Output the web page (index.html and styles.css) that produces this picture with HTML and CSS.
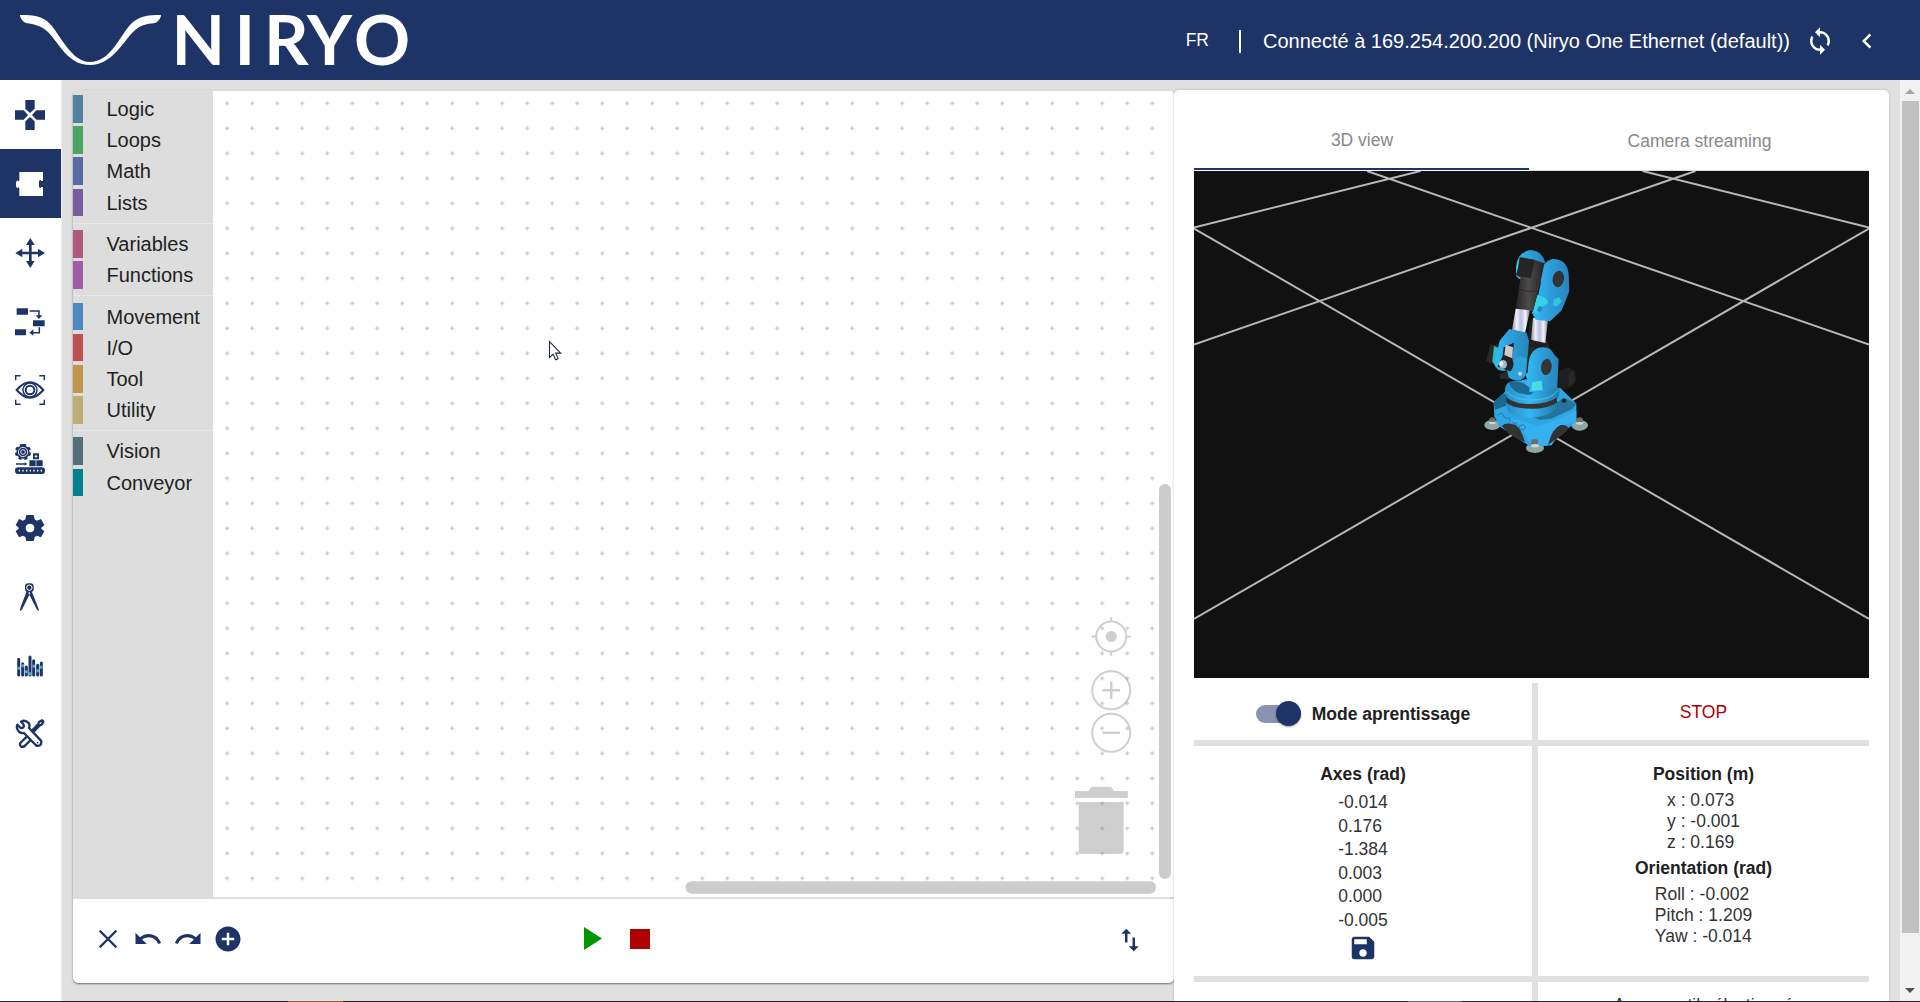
FILE: index.html
```html
<!DOCTYPE html>
<html lang="fr">
<head>
<meta charset="utf-8">
<title>Niryo One Studio</title>
<link rel="stylesheet" href="styles.css">
</head>
<body>
<div class="app">
  <header class="header">
    <svg class="logo" viewBox="0 0 400 80" width="400" height="80" role="img" aria-label="Niryo">
      <path fill="#fff" d="M0 15C14 15 23 16 30 24C40 34 51 62 70 62C90 62 100 36 110 25C118 16 127 15 141 15C141 18 138 22 135 23C126 24 120 25 113 32C103 42 92 65 70 65C48 65 39 43 28 32C22 26 14 24 6 23C3 22 0 18 0 15Z"/>
      <text class="logo-text" y="65" x="151.500 214.500 244 287 334">NIRYO</text>
    </svg>
    <div class="status">
      <span class="lang">FR</span>
      <span class="divider"></span>
      <span class="connection">Connecté à 169.254.200.200 (Niryo One Ethernet (default))</span>
      <svg class="icon sync" viewBox="0 0 24 24"><path d="M12 4V1L8 5l4 4V6c3.310 0 6 2.690 6 6 0 1.010-.25 1.970-.7 2.800l1.460 1.460C19.540 15.030 20 13.570 20 12c0-4.420-3.580-8-8-8zm0 14c-3.310 0-6-2.690-6-6 0-1.010.25-1.970.7-2.800L5.240 7.740C4.460 8.970 4 10.430 4 12c0 4.420 3.580 8 8 8v3l4-4-4-4v3z"/></svg>
      <svg class="icon chevron" viewBox="0 0 24 24"><path d="M15.410 7.410L14 6l-6 6 6 6 1.410-1.410L10.830 12z"/></svg>
    </div>
  </header>

  <div class="body">
    <nav class="sidebar">
      <a class="nav-item"><svg viewBox="0 0 90 90"><path d="M31 0h28v26L45 39 31 26z"/><path d="M31 0h28v26L45 39 31 26z" transform="rotate(90 45 45)"/><path d="M31 0h28v26L45 39 31 26z" transform="rotate(180 45 45)"/><path d="M31 0h28v26L45 39 31 26z" transform="rotate(270 45 45)"/></svg></a>
      <a class="nav-item active"><svg viewBox="0 0 90 90"><path d="M13 9h71v27h-5l-2-3-5 2v20l5 2 2-3h5v27H13V57l-3-2-2 3-5-5V39l5-5 2 3 3-2z"/></svg></a>
      <a class="nav-item"><svg viewBox="0 0 90 90"><path d="M46 0l13 21h-9v20h19v-9l21 13-21 13v-9H50v20h9L46 90 33 69h9V49H22v9L1 45l21-13v9h20V21h-9z"/></svg></a>
      <a class="nav-item"><svg viewBox="0 0 90 90"><path d="M5 4h34v19H5zM54 40h35v18H54zM0 67h33v18H0z"/><path class="line" d="M44 12h28v15M73 61v16H49"/><path d="M62 25h20L72 36zM55 67v19L43 77z"/></svg></a>
      <a class="nav-item"><svg viewBox="0 0 90 90"><path class="line" d="M2 16V2h15M73 2h15v14M2 74v14h15M73 88h15V74"/><path class="line eye" d="M5 45Q45-1 85 45Q45 91 5 45z"/><circle class="line" cx="45" cy="45" r="21"/><circle class="line eye" cx="45" cy="45" r="13"/></svg></a>
      <a class="nav-item"><svg viewBox="0 0 90 90"><circle cx="24" cy="24" r="20"/><path class="line" style="stroke-width:9" stroke-dasharray="9 7.500" d="M24 4a20 20 0 1 1-.1 0"/><circle cx="24" cy="24" r="14" fill="none" stroke="#fff" stroke-width="2.500"/><circle cx="24" cy="24" r="7" fill="none" stroke="#fff" stroke-width="2.500"/><path d="M54 28h18v18H54zM43 49h19v18H43zM64 49h19v18H64z"/><path stroke="#fff" stroke-width="3" d="M59 37h8M63 33v8"/><path class="line" d="M3 60h28"/><path d="M29 55l8 5-8 5z"/><rect y="70" width="90" height="20" rx="10"/><path stroke="#fff" stroke-width="5" stroke-dasharray="4 7" d="M11 80h70"/></svg></a>
      <a class="nav-item"><svg viewBox="0 0 90 90"><path fill-rule="evenodd" d="M34 6h22l3 13 7 4 12-5 10 18-9 8v3l9 8-10 18-12-5-7 4-3 12H34l-3-12-7-4-12 5L2 55l9-8v-3l-9-8 10-18 12 5 7-4zM45 32a13 13 0 1 0 .1 0z"/></svg></a>
      <a class="nav-item"><svg viewBox="0 0 90 90"><path d="M35 28l11 4-25 51-6 4 1-9zM50 28l-10 4 26 51 6 4-2-9z"/><rect x="30" y="4" width="26" height="26" rx="10"/><circle cx="43" cy="17" r="8" fill="none" stroke="#fff" stroke-width="3"/></svg></a>
      <a class="nav-item"><svg viewBox="0 0 90 90"><path class="bars" d="M11 25v47M23 38v34M34 48v24M45 18v54M56 29v43M68 43v29M79 36v36"/><path stroke="#4aa8c9" stroke-width="9" d="M7 52h8M19 44h8M30 62h8M41 68h8M52 46h8M64 59h8M75 49h8"/></svg></a>
      <a class="nav-item"><svg viewBox="0 0 90 90"><path class="tool" d="M18 8q12-7 24 5 3 7 0 14l36 38q3 8-3 14-7 4-13-1L27 42Q12 44 6 28q-1-6 1-11l10 10q8 1 10-6-1-7-9-13z"/><path class="tool" d="M52 34l18-19 2-6 9-5 4 4-5 9-6 2-18 19M36 52L16 72q-3 8 4 12 8 0 12-6l14-14"/><circle cx="68" cy="71" r="2.500"/></svg></a>
    </nav>

    <main class="main">
      <section class="editor">
        <div class="editor-top">
          <ul class="toolbox">
            <li class="cat" style="border-color:#5381a2">Logic</li>
            <li class="cat" style="border-color:#4aa564">Loops</li>
            <li class="cat" style="border-color:#5969a3">Math</li>
            <li class="cat" style="border-color:#795da3">Lists</li>
            <li class="sep"></li>
            <li class="cat" style="border-color:#af587c">Variables</li>
            <li class="cat" style="border-color:#a25ba5">Functions</li>
            <li class="sep"></li>
            <li class="cat" style="border-color:#4f87c0">Movement</li>
            <li class="cat" style="border-color:#c05053">I/O</li>
            <li class="cat" style="border-color:#bf964b">Tool</li>
            <li class="cat" style="border-color:#beac74">Utility</li>
            <li class="sep"></li>
            <li class="cat" style="border-color:#546e7a">Vision</li>
            <li class="cat" style="border-color:#00838f">Conveyor</li>
          </ul>
          <svg class="workspace" width="961" height="806" viewBox="213 91 961 806">
            <defs>
              <pattern id="grid" x="214.700" y="90.800" width="25" height="25" patternUnits="userSpaceOnUse"><path stroke="#c8c8c8" stroke-width="1.400" d="M10.600 12.500h3.800M12.500 10.600v3.800"/></pattern>
            </defs>
            <rect x="213" y="91" width="961" height="806" fill="#fff"/>
            <rect x="213" y="91" width="961" height="806" fill="url(#grid)"/>
            <g opacity=".4" fill="none" stroke="#888" stroke-width="2">
              <circle cx="1111.200" cy="636.500" r="15"/>
              <circle cx="1111.200" cy="636.500" r="5.500" fill="#888" stroke="none"/>
              <path d="M1111.200 617v4.500M1111.200 651.500v4.500M1091.500 636.500h4.500M1126.500 636.500h4.500"/>
              <circle cx="1111.200" cy="690.300" r="19"/>
              <path d="M1102.500 690.300h17.500M1111.200 681.500v17.500" stroke-width="2.400"/>
              <circle cx="1111.200" cy="732.800" r="19"/>
              <path d="M1102.500 732.800h17.500" stroke-width="2.400"/>
              <path fill="#888" stroke="none" d="M1075 791h13.500l3-4.300h19.500l3 4.300h13.800v7H1075zM1078.700 802h45v48.500q0 3.500-3.500 3.500h-38q-3.500 0-3.500-3.500z"/>
            </g>
            <rect x="1159" y="484" width="12" height="395" rx="6" fill="#ccc"/>
            <rect x="685.500" y="881.300" width="470.500" height="12.500" rx="6.200" fill="#ccc"/>
            <path fill="#fff" stroke="#222b38" stroke-width="1.100" d="M549.500 341.500v16l3.700-3.400 2.400 5.600 2.500-1.100-2.400-5.500h5z"/>
          </svg>
        </div>
        <div class="toolbar">
          <div class="tools">
            <svg class="icon" viewBox="0 0 24 24"><path fill="none" stroke="#1f3466" stroke-width="1.700" d="M5.300 5.300l13.400 13.400M18.700 5.300L5.300 18.700"/></svg>
            <svg class="icon" viewBox="0 0 24 24"><path d="M12.500 8c-2.650 0-5.050.99-6.900 2.600L2 7v9h9l-3.620-3.620c1.390-1.160 3.160-1.880 5.120-1.880 3.540 0 6.550 2.310 7.600 5.500l2.370-.78C21.080 11.030 17.150 8 12.500 8z"/></svg>
            <svg class="icon" viewBox="0 0 24 24"><path d="M18.400 10.600C16.550 8.990 14.150 8 11.500 8c-4.650 0-8.580 3.030-9.960 7.220L3.900 16c1.050-3.190 4.050-5.500 7.600-5.500 1.950 0 3.730.72 5.120 1.880L13 16h9V7l-3.600 3.600z"/></svg>
            <svg class="icon" viewBox="0 0 24 24"><path d="M12 2C6.480 2 2 6.480 2 12s4.480 10 10 10 10-4.480 10-10S17.520 2 12 2zm5 11h-4v4h-2v-4H7v-2h4V7h2v4h4v2z"/></svg>
          </div>
          <div class="run">
            <svg width="18" height="23" viewBox="0 0 18 23"><path fill="#009600" d="M0 0l18 11.500L0 23z"/></svg>
            <span class="stop-square"></span>
          </div>
          <svg class="icon swap" viewBox="0 0 24 24"><path d="M16 17.010V10h-2v7.010h-3L15 21l4-3.990h-3zM9 3L5 6.990h3V14h2V6.990h3L9 3z"/></svg>
        </div>
      </section>

      <section class="panel">
        <div class="tabs">
          <div class="tab selected">3D view</div>
          <div class="tab">Camera streaming</div>
        </div>
        <svg class="scene" width="675" height="507" viewBox="0 0 675 507">
          <defs>
            <linearGradient id="blue"><stop offset="0" stop-color="#2fc0ee"/><stop offset=".35" stop-color="#2fa4e2"/><stop offset="1" stop-color="#2784bb"/></linearGradient>
            <linearGradient id="drum"><stop offset="0" stop-color="#2490c4"/><stop offset=".45" stop-color="#35b4f4"/><stop offset="1" stop-color="#217aa8"/></linearGradient>
            <linearGradient id="steel"><stop offset="0" stop-color="#8b8b98"/><stop offset=".25" stop-color="#f0f0fb"/><stop offset=".5" stop-color="#b8c0de"/><stop offset=".75" stop-color="#f2f2fa"/><stop offset="1" stop-color="#77777f"/></linearGradient>
            <linearGradient id="dark"><stop offset="0" stop-color="#242424"/><stop offset=".45" stop-color="#4c4c4c"/><stop offset="1" stop-color="#222"/></linearGradient>
          </defs>
          <rect width="675" height="507" fill="#111"/>
          <path stroke="#b8b8b8" stroke-width="2" d="M0 56.500L226.500 0M675 56.500L448.500 0M173 0l502 173.500M501.500 0L0 173.500M0 57.500L675 448M675 57.500L0 448"/>
          <g transform="translate(266 59) scale(.33333)">
            <g fill="#8fa6a6"><ellipse cx="97" cy="585" rx="24" ry="15"/><ellipse cx="359" cy="586" rx="25" ry="16"/><ellipse cx="225" cy="654" rx="27" ry="15"/></g>
            <path fill="#1e1e1e" d="M296 424l25-13 25 12 3 27-11 19-27 11-17-8z"/>
            <path fill="#292929" d="M326 431l17-7v35l-17 8z"/>
            <path fill="#2fa6e4" d="M101 517l34-32 166-11 48 47v51l-12 12-72 62-57 2-90-59-15-30z"/>
            <path fill="#24749e" d="M213 541l85-28 13-11 38 19-12 16-63 29-34 4-35-14z"/>
            <path fill="#1c6a94" d="M101 517l29-28 12 8-3 30-34 12z"/>
            <path fill="#35b0f0" d="M170 569l66 19 70-25 43-23v35l-32 8-42 63-30 2-37-13-26-50-42-16z"/>
            <path fill="#333" d="M125 587q16-12 42-2 17 12 28 51l-26-11-24-15zM264 645q12-50 38-60 20-2 25 12l-22 19z"/>
            <path fill="none" stroke="#217bac" stroke-width="3" d="M113 556l12-8 10 16 14 0 1 12M158 574l7 10 6-8M178 590a9 7 0 1 0 18 4a9 7 0 1 0-18-4"/>
            <path fill="url(#drum)" d="M141 502v38q16 25 68 23 60-2 82-30v-36z"/>
            <path fill="url(#drum)" d="M135 475q3-25 40-22l80-18 43 41q7 30-30 48-68 20-113-9-21-13-20-40z"/>
            <path fill="#1c688f" d="M145 456q42-10 77 30l-10 8q-52 2-67-38z"/>
            <path fill="#333" d="M139 501q24 22 76 21 50 0 76-20v16q-31 19-79 18-53-1-73-18z"/>
            <path fill="none" stroke="#4bc0e8" stroke-width="3" d="M137 483q29 29 78 27 57 1 80-30"/>
            <ellipse cx="312" cy="512" rx="7" ry="6" fill="#222"/>
            <path fill="#292929" d="M205 343l20-15 36 3 9 26-60 72-50 19-39-1-2-14 48-20z"/>
            <path fill="#1f1f1f" d="M207 275l14-10-8 72 50 2-10 25-48-15z"/>
            <path fill="url(#steel)" d="M219 263l45 8-8 68-43-10z"/>
            <path fill="url(#blue)" d="M204 427q-1-58 28-72 37-11 51 19l13 14-4 81-34 17-51 1 5-35q-17-5-14-21z"/>
            <path fill="#49dce6" d="M217 456l28-4 3 29-34 1z"/>
            <ellipse cx="259" cy="411" rx="16" ry="24" fill="#343434" transform="rotate(8 259 411)"/>
            <path fill="#2a2a2a" d="M232 108l34-20 14 0-34 34-8 40z"/>
            <path fill="url(#blue)" d="M169 139q-8-72 43-79 35 3 43 37l-31 86-34-33-13-4z"/>
            <path fill="#3ce1ec" d="M170 128q-3-29 12-39l-3 35z"/>
            <path fill="url(#blue)" d="M242 161q-7-60 35-74 44-2 49 46l2 49q-8 25-24 60l-34 32-43-5-11-21 18-51z"/>
            <path fill="#33d4ea" d="M231 195l26 9 8 14-19 12-14 20-12-6z"/>
            <path fill="#2fc6e4" d="M282 208l15-6 8 12-14 16-12-4z"/>
            <path fill="#2784b7" d="M236 228l12 4-5 14-13-3z"/>
            <ellipse cx="295" cy="147" rx="17" ry="25" fill="#333" transform="rotate(10 295 147)"/>
            <path fill="url(#dark)" d="M184 82l41 8 28 10-10 50-24 93-52-6 15-94-14-9z"/>
            <path fill="#252525" d="M179 82l46 8-13 55-42-10z"/>
            <path fill="none" stroke="#222" stroke-width="2" d="M176 176q25 13 56 6"/>
            <path fill="url(#steel)" d="M167 236l43 5-15 68-39-10z"/>
            <path fill="#292929" d="M91 342l23 6-11 56-24-11z"/>
            <path fill="#2eb9c6" d="M102 348l14 6-7 61-12-22z"/>
            <path fill="url(#blue)" d="M148 297l52 11 7 25-9 102q-20 31-52 7l-5-21q-33 9-37-24l15-65z"/>
            <path fill="#222" d="M131 352l31-14-5 48 5 19-7 21-42-16 15-32z"/>
            <path fill="#ccc" d="M137 344l22 8-2 33-24-10z"/>
            <ellipse cx="129" cy="403" rx="12" ry="13" fill="#9eb6d5"/>
            <ellipse cx="124" cy="401" rx="6" ry="8" fill="#e2ebf5"/>
            <path fill="#2da3dc" d="M163 390q17-19 37-3l-3 46q-10 22-35 13-17-6-15-19 13-5 16-37z"/>
            <circle cx="180" cy="431" r="6" fill="#c8d4dd"/>
            <g fill="#716c66"><ellipse cx="97" cy="570" rx="9" ry="8"/><ellipse cx="359" cy="571" rx="10" ry="9"/><ellipse cx="224" cy="636" rx="11" ry="9"/></g>
            <g fill="#c8d8d7"><ellipse cx="97" cy="579" rx="10" ry="4"/><ellipse cx="359" cy="580" rx="11" ry="4"/><ellipse cx="225" cy="647" rx="12" ry="5"/></g>
          </g>
        </svg>
        <div class="cells">
          <div class="cell mode"><span class="switch"><span class="thumb"></span></span><b>Mode aprentissage</b></div>
          <div class="cell stop">STOP</div>
          <div class="cell axes">
            <h3>Axes (rad)</h3>
            <div class="values">-0.014<br>0.176<br>-1.384<br>0.003<br>0.000<br>-0.005</div>
            <svg class="icon" viewBox="0 0 24 24"><path d="M17 3H5c-1.110 0-2 .9-2 2v14c0 1.100.89 2 2 2h14c1.100 0 2-.9 2-2V7l-4-4zm-5 16c-1.660 0-3-1.340-3-3s1.340-3 3-3 3 1.340 3 3-1.340 3-3 3zm3-10H5V5h10v4z"/></svg>
          </div>
          <div class="cell pose">
            <h3>Position (m)</h3>
            <div class="values">x : 0.073<br>y : -0.001<br>z : 0.169</div>
            <h3>Orientation (rad)</h3>
            <div class="values">Roll : -0.002<br>Pitch : 1.209<br>Yaw : -0.014</div>
          </div>
          <div class="cell more"><svg width="12" height="12" viewBox="0 0 12 12"><path fill="#1f3466" d="M6 0l6 6H0z"/></svg></div>
          <div class="cell outil">Aucun outil sélectionné</div>
        </div>
      </section>
    </main>

    <div class="scrollbar">
      <span class="arrow up"></span>
      <span class="track"><span class="grip"></span></span>
      <span class="arrow down"></span>
    </div>
  </div>
  <div class="desktop-edge"><i></i><b></b></div>
</div>
</body>
</html>
```
FILE: styles.css
```css
* { box-sizing: border-box; }

body {
  margin: 0;
  font-family: "Liberation Sans", Arial, sans-serif;
  font-size: 17.5px;
  color: #212121;
}

.app {
  width: 1920px;
  height: 1002px;
  overflow: hidden;
  display: flex;
  flex-direction: column;
}

.icon {
  width: 30px;
  height: 30px;
  flex: none;
  fill: #1f3466;
  display: block;
}

/* header */
.header {
  height: 80px;
  flex: none;
  padding: 0 38px 0 20px;
  display: flex;
  justify-content: space-between;
  background: #1f3466;
  color: #fff;
}

.logo { flex: none; overflow: visible; }

.logo-text {
  font-family: Lato, sans-serif;
  font-weight: 700;
  font-size: 69.5px;
  fill: #fff;
}

.status { display: flex; align-items: center; }
.status .icon { fill: #fff; }
.lang { line-height: 20px; margin-top: -1px; }
.divider { width: 2px; height: 23px; margin: 3px 22px 0 30px; background: #fff; }
.connection { font-size: 20px; line-height: 24px; margin-top: 2px; white-space: nowrap; }
.sync { margin: 2px 17px 0 15px; }
.chevron { margin-top: 2px; }

/* body */
.body { flex: 1; min-height: 0; display: flex; background: #e0e0e0; }

.sidebar {
  width: 62px;
  flex: none;
  background: #fff;
  border-right: 1px solid #eee;
}

.nav-item {
  height: 68.8px;
  padding: 1.500px 1px 0 0;
  display: flex;
  align-items: center;
  justify-content: center;
  fill: #1f3466;
}

.nav-item.active { background: #1f3466; fill: #fff; }
.nav-item svg { width: 30px; height: 30px; }
.line { fill: none; stroke: #1f3466; stroke-width: 4.5; }
.eye { stroke-width: 6; }
.bars { fill: none; stroke: #1f3466; stroke-width: 9; stroke-linecap: round; }
.tool { fill: none; stroke: #1f3466; stroke-width: 7; stroke-linejoin: round; }

.main { flex: 1; min-width: 0; display: flex; padding: 10px 11px 0; }

.editor {
  width: 1101px;
  height: 893px;
  flex: none;
  display: flex;
  flex-direction: column;
  background: #fff;
  border-radius: 5px;
  overflow: hidden;
  box-shadow: 0 1px 2px rgba(0, 0, 0, .5);
}

.editor-top { height: 809px; display: flex; background: #ddd; padding-top: 1px; }

.toolbox {
  width: 140px;
  margin: 0;
  padding: 4px 0 0;
  list-style: none;
  font-size: 20px;
}

.cat {
  height: 27.7px;
  margin-bottom: 3.5px;
  padding-left: 23.5px;
  border-left: 10px solid;
  line-height: 28.5px;
  color: #222;
}

.sep { height: 1px; margin: 6.5px 0 6.2px; background: #e8e8e8; }

.workspace { display: block; flex: none; }

.toolbar {
  flex: 1;
  padding: 0 29px 5px 19.5px;
  display: flex;
  align-items: center;
}

.tools { display: flex; gap: 10px; }
.run { display: flex; align-items: center; gap: 28px; margin-left: 341.5px; }
.stop-square { width: 20px; height: 20px; background: #b00000; }
.swap { margin: 3px 0 0 auto; }

/* right panel */
.panel {
  width: 715px;
  flex: none;
  padding: 0 20px;
  background: #fff;
  border-radius: 5px 5px 0 0;
  box-shadow: 0 0 3px rgba(0, 0, 0, .2);
}

.tabs { display: grid; grid-template-columns: 335px 340px; height: 81px; padding-top: 20px; }

.tab {
  display: flex;
  align-items: center;
  justify-content: center;
  padding: 2px 0 0 1px;
  color: #888;
  border-bottom: 1px solid #ddd;
}

.tab.selected { border-bottom: 2px solid #1f3466; margin-bottom: 1px; }

.scene { display: block; margin-bottom: 5px; }

.cells {
  display: grid;
  grid-template-columns: 338px 331px;
  grid-template-rows: 57px 230px 60px;
  gap: 6px;
  background: #e0e0e0;
}

.cell { background: #fff; }
.mode, .stop { display: flex; align-items: center; justify-content: center; }
.mode { gap: 11px; padding-top: 4px; }
.mode b { padding-top: 1px; }
.stop { padding-top: 2px; color: #b00000; }

.switch {
  width: 45px;
  height: 18px;
  border-radius: 9px;
  background: #8a94b2;
  display: flex;
  justify-content: flex-end;
  align-items: center;
}

.thumb {
  width: 25px;
  height: 25px;
  flex: none;
  border-radius: 50%;
  background: #1f3466;
  box-shadow: 0 1px 2px rgba(0, 0, 0, .4);
}

h3 { margin: 0; font-size: 17.5px; line-height: 20px; }

.axes, .pose { display: flex; flex-direction: column; align-items: center; padding-top: 18px; }
.values { color: #333; white-space: pre; }
.axes .values { line-height: 23.5px; margin: 7px 0 1px; }
.pose .values { line-height: 21px; }
.pose h3 + .values { margin: 6px 0 5px; }

.more { padding: 16px 0 0 284px; }
.outil { text-align: center; padding-top: 12.5px; line-height: 20px; color: #333; }

/* page scrollbar */
.scrollbar {
  width: 20px;
  flex: none;
  display: flex;
  flex-direction: column;
  align-items: center;
  background: #f1f1f1;
}

.track { flex: 1; padding-top: 7px; }
.grip { display: block; width: 17px; height: 832px; background: #c1c1c1; }
.arrow { border: 5px solid transparent; border-top-width: 0; border-bottom-width: 0; }
.arrow.up { margin-top: 9px; border-bottom: 5px solid #a3a3a3; }
.arrow.down { margin-bottom: 8px; border-top: 5px solid #505050; }

.desktop-edge { height: 1px; flex: none; display: flex; background: #2a2228; }
.desktop-edge i { width: 55px; margin-left: 288px; background: #a0602c; }
.desktop-edge b { width: 54px; margin-left: 1065px; background: #6b6b6b; }
```
